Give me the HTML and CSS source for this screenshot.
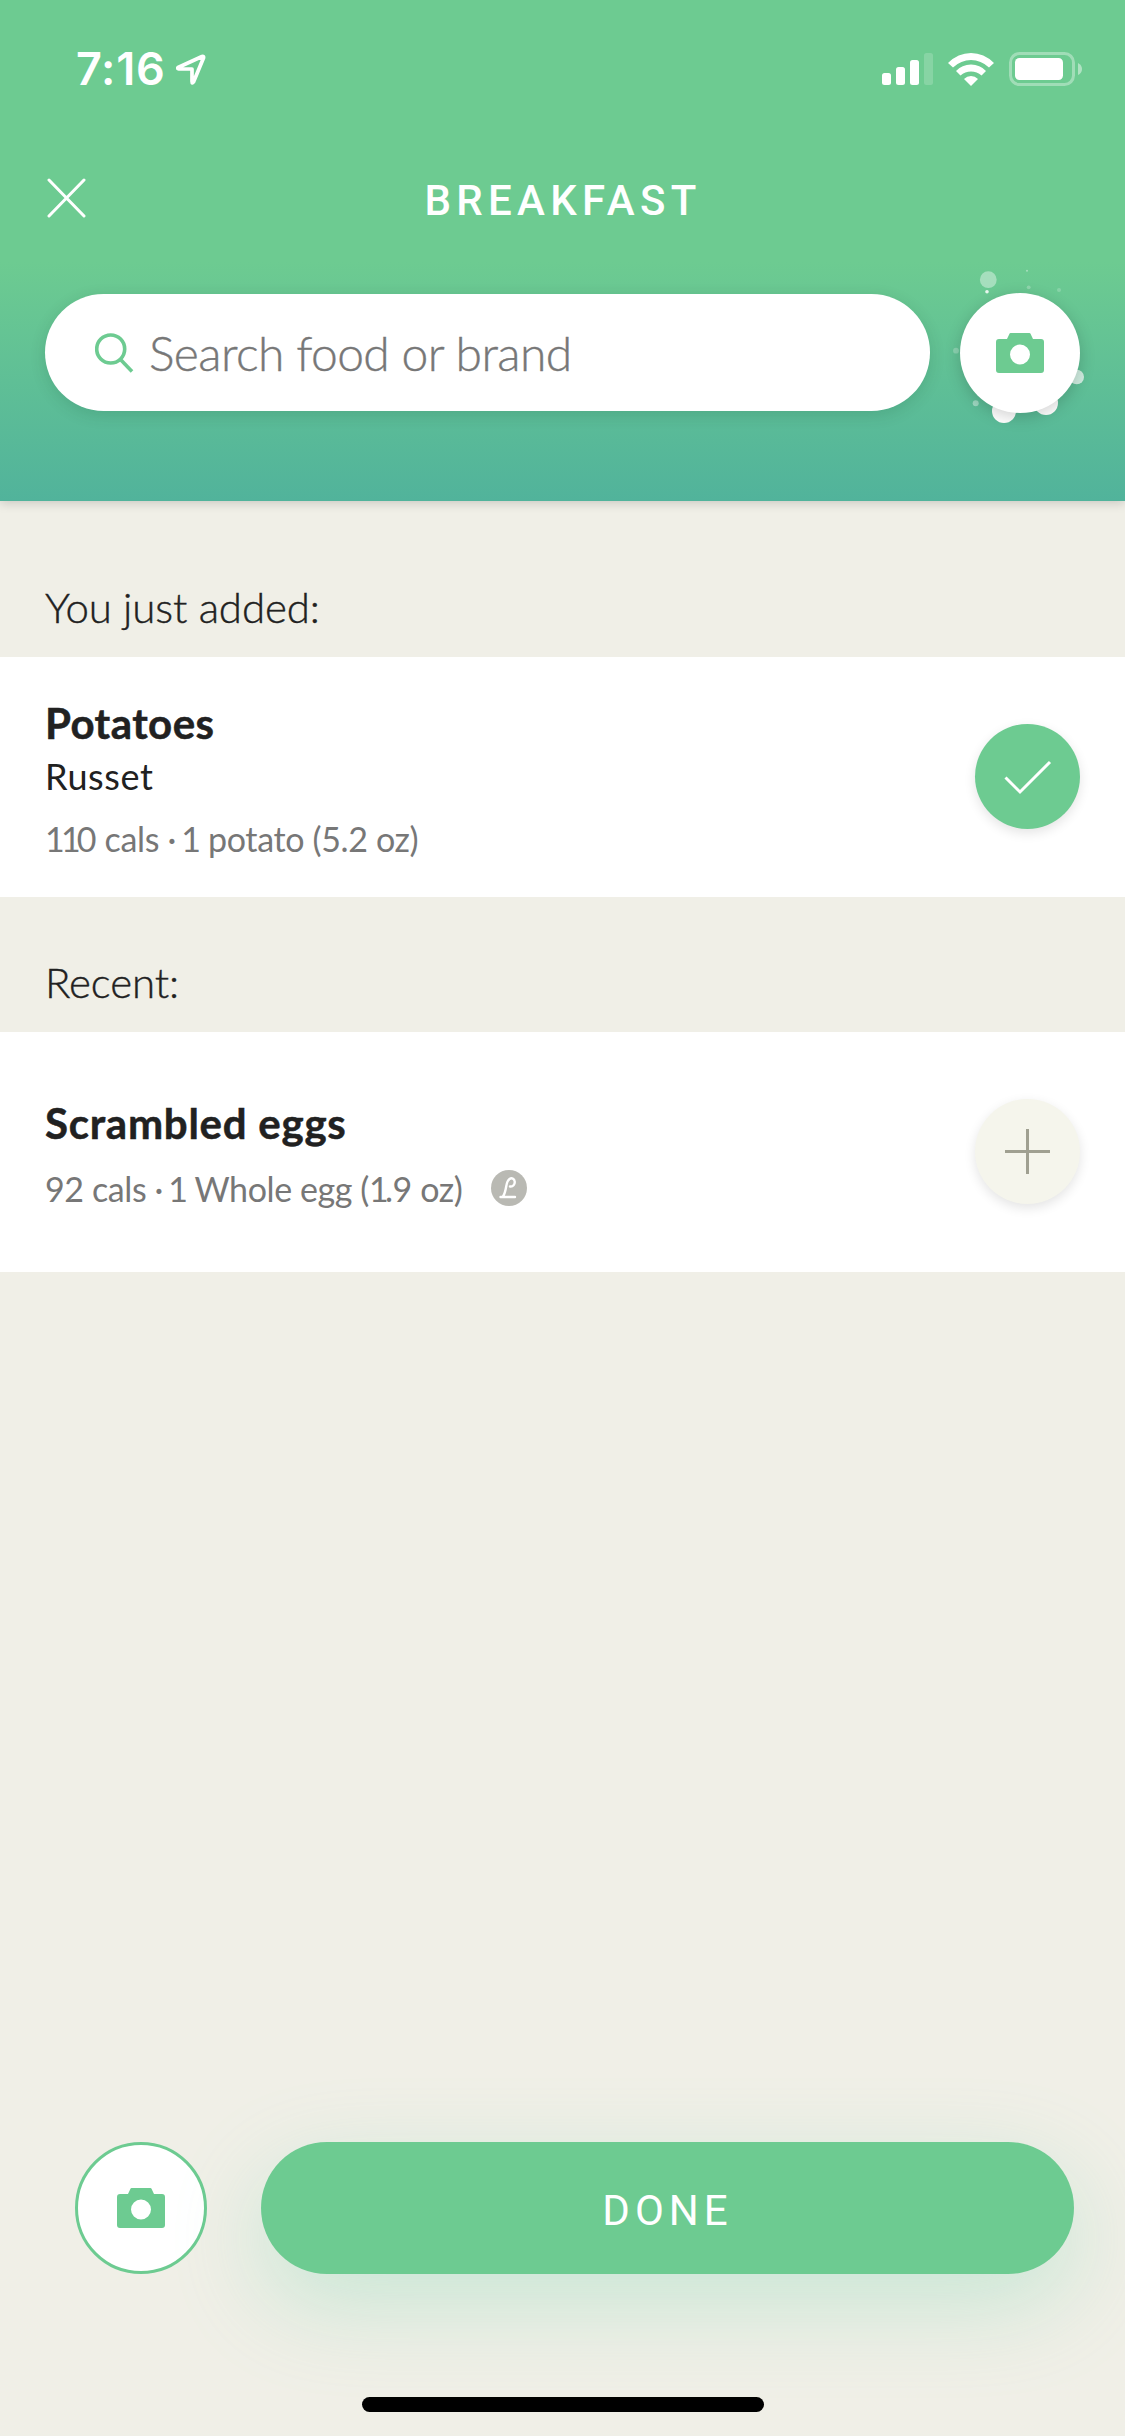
FILE: index.html
```
<!DOCTYPE html>
<html lang="en">
<head>
<meta charset="utf-8">
<title>Breakfast</title>
<link rel="stylesheet" href="styles.css">
</head>
<body>
<svg width="0" height="0" class="defs" aria-hidden="true">
  <symbol id="camera" viewBox="0 0 48 40">
    <path fill-rule="evenodd" d="M14.5 0h19a1 1 0 0 1 .9.6L37 6h8a3 3 0 0 1 3 3v28a3 3 0 0 1-3 3H3a3 3 0 0 1-3-3V9a3 3 0 0 1 3-3h8L13.6.6A1 1 0 0 1 14.5 0ZM24 11.5a10 10 0 1 0 0 20a10 10 0 1 0 0-20Z"/>
  </symbol>
</svg>

<header class="header">
  <div class="status">
    <span class="time">7:16</span>
    <svg class="location" width="30" height="32" viewBox="0 0 30 32"><path d="M2 14.5 26 3.5Q28 3 27.5 5L17.5 29Q16 31 16 28.500V16H3Q1 15.500 2 14.500Z"/></svg>
    <div class="indicators">
      <svg width="51" height="32" viewBox="0 0 51 32" fill="#fff"><rect y="20" width="9" height="12" rx="2.500"/><rect x="14" y="14" width="9" height="18" rx="2.500"/><rect x="28" y="7" width="9" height="25" rx="2.500"/><rect x="42" width="9" height="32" rx="2.500" opacity=".18"/></svg>
      <svg class="wifi" width="46" height="33" viewBox="0 0 46 33" fill="#fff"><path d="M0 10Q10 0 23 0T46 10L41 14.500Q33 7 23 7T5 14.500Z"/><path d="M8 18Q14 11.500 23 11.500T38 18L33.500 22.500Q29 18.500 23 18.500T12.500 22.500Z"/><path d="M16 26Q19 23 23 23T30 26L23 33Z"/></svg>
      <svg class="battery" width="74" height="34" viewBox="0 0 74 34"><rect x="1.500" y="1.500" width="63" height="31" rx="9" fill="none" stroke="#fff" stroke-width="3" opacity=".35"/><rect x="6" y="6" width="48" height="22" rx="4.500" fill="#fff"/><path d="M69 11q4 2 4 6t-4 6Z" fill="#fff" opacity=".45"/></svg>
    </div>
  </div>
  <div class="nav">
    <svg class="close" width="39" height="40" viewBox="0 0 39 40"><path d="m2 2 35 36M37 2 2 38"/></svg>
    <h1 class="title">BREAKFAST</h1>
  </div>
  <div class="search-row">
    <div class="search">
      <svg width="39" height="40" viewBox="0 0 39 40"><circle cx="15.700" cy="16" r="14"/><path d="M25.500 26.500 37 38.500"/></svg>
      <span class="placeholder">Search food or brand</span>
    </div>
    <div class="scan">
      <svg class="sparks" width="160" height="170" viewBox="940 260 160 170" fill="#fff"><circle cx="988.300" cy="279.700" r="8.400" opacity=".4"/><circle cx="987" cy="291.700" r="1.800" opacity=".85"/><circle cx="1027" cy="270.700" r="1" opacity=".4"/><circle cx="1028.700" cy="287.300" r="1.900" opacity=".25"/><circle cx="1059" cy="290" r="2" opacity=".2"/><circle cx="956" cy="350.700" r="2.900" opacity=".25"/><circle cx="975.700" cy="403.300" r="3" opacity=".4"/><circle cx="1004" cy="411" r="12"/><circle cx="1046" cy="403" r="12"/><circle cx="1076.700" cy="377" r="7.300" opacity=".7"/></svg>
      <div class="scan-button"><svg width="48" height="40"><use href="#camera"/></svg></div>
    </div>
  </div>
</header>

<main class="list">
  <h2 class="heading first">You just added:</h2>
  <section class="item">
    <div class="info">
      <div class="name">Potatoes</div>
      <div class="variety">Russet</div>
      <div class="detail"><span class="ones">1</span><span class="ones">1</span>0 cals · <span class="one">1</span> potato (5.2 oz)</div>
    </div>
    <div class="action added"><svg width="105" height="105" viewBox="0 0 105 105"><path d="M30.500 53.500 45 68 75 38"/></svg></div>
  </section>
  <h2 class="heading">Recent:</h2>
  <section class="item short">
    <div class="info">
      <div class="name scrambled">Scrambled eggs</div>
      <div class="detail line"><span class="eggs">92 cals · <span class="one">1</span> Whole egg (<span class="ones">1</span>.9 oz)</span>
        <svg class="badge" width="36" height="36" viewBox="0 0 36 36"><circle cx="18" cy="18" r="18"/><path d="M19 16.500c3 .5 5-2 4.700-5s-3-4-5.200-2.500-2.700 4-3.300 7.500-1.200 7-3.200 10M9.500 27h14.500"/></svg>
      </div>
    </div>
    <div class="action add"><svg width="105" height="105" viewBox="0 0 105 105"><path d="M30 52.500h45M52.500 30v45"/></svg></div>
  </section>
</main>

<footer class="dock">
  <div class="buttons">
    <div class="snap"><svg width="48" height="40"><use href="#camera"/></svg></div>
    <div class="done">DONE</div>
  </div>
  <div class="home"></div>
</footer>
</body>
</html>
```
FILE: styles.css
```
* { box-sizing: border-box; }

body {
  margin: 0;
  width: 1125px;
  height: 2436px;
  display: flex;
  flex-direction: column;
  overflow: hidden;
  background: #f0efe7;
  color: #212121;
  font-family: Lato, sans-serif;
}

svg { display: block; flex: none; }
.defs { position: absolute; }

.header {
  height: 501px;
  flex: none;
  background: linear-gradient(#6dcb91 0, #6dcb91 262px, #51b39b 501px);
  box-shadow: 0 2px 10px rgba(0, 0, 0, .17);
}

.status {
  height: 138px;
  padding: 0 43px 0 76px;
  display: flex;
  align-items: center;
}
.time {
  color: #fff;
  font: 600 45px/54px Inter, sans-serif;
  letter-spacing: .7px;
  width: 100px;
}
.location {
  fill: none;
  stroke: #fff;
  stroke-width: 3.7;
  stroke-linejoin: round;
}
.indicators { margin-left: auto; display: flex; align-items: center; }
.wifi { margin-left: 15px; }
.battery { margin-left: 15px; margin-right: -1px; }

.nav {
  height: 120px;
  padding: 0 46px 0 47px;
  display: grid;
  grid-template-columns: 39px 1fr 39px;
  align-items: center;
}
.close { fill: none; stroke: #fff; stroke-width: 3; stroke-linecap: round; }
.title {
  margin: 5px 0 0;
  text-align: center;
  color: #fff;
  font: 500 42px/50px Roboto, sans-serif;
  letter-spacing: 5.3px;
}

.search-row {
  padding: 35px 45px 0;
  display: flex;
  justify-content: space-between;
}
.search {
  width: 885px;
  height: 117px;
  margin-top: 1px;
  padding-left: 50px;
  display: flex;
  align-items: center;
  border-radius: 59px;
  background: #fff;
  box-shadow: 0 4px 16px rgba(0, 60, 30, .14);
}
.search svg { fill: none; stroke: #6dcb91; stroke-width: 3.6; }
.placeholder {
  margin-left: 15px;
  color: #777;
  font-size: 48px;
  font-weight: 300;
  line-height: 60px;
  letter-spacing: -.6px;
  -webkit-text-stroke: .4px;
}
.scan { position: relative; width: 120px; height: 120px; }
.sparks { position: absolute; left: -20px; top: -33px; }
.scan-button {
  position: relative;
  width: 120px;
  height: 120px;
  display: flex;
  align-items: center;
  justify-content: center;
  border-radius: 50%;
  background: #fff;
  fill: #6dcb91;
  box-shadow: 0 4px 16px rgba(0, 0, 0, .18);
}

.heading {
  height: 135px;
  margin: 0;
  padding: 60px 45px 25px;
  font-size: 42px;
  font-weight: 300;
  line-height: 50px;
  letter-spacing: -.1px;
  -webkit-text-stroke: .4px;
}
.heading.first { height: 156px; padding-top: 81px; }

.item {
  height: 240px;
  padding: 0 45px;
  display: flex;
  align-items: center;
  justify-content: space-between;
  background: #fff;
}
.info { height: 240px; padding-top: 41px; }
.short .info { padding-top: 66px; }
.name { font-size: 42px; font-weight: 700; line-height: 50px; letter-spacing: .45px; -webkit-text-stroke: .5px; }
.scrambled { letter-spacing: .75px; }
.variety { font-size: 36px; line-height: 56px; letter-spacing: .6px; }
.detail {
  margin-top: 10px;
  color: #777;
  font-size: 34px;
  line-height: 50px;
  letter-spacing: -.35px;
}
.short .detail { margin-top: 16px; letter-spacing: -.4px; }
.line { display: flex; align-items: center; }
.detail .ones { letter-spacing: -3.8px; }
.one { margin: 0 -1px 0 -3px; }
.eggs { width: 446px; white-space: nowrap; }
.badge { margin-top: -3px; fill: none; stroke: #fff; stroke-width: 2.4; stroke-linecap: round; }
.badge circle { fill: #b9b9b3; stroke: none; }

.action {
  width: 105px;
  height: 105px;
  border-radius: 50%;
  box-shadow: 0 4px 12px rgba(0, 0, 0, .11);
  position: relative;
  top: -.5px;
}
.action svg { fill: none; stroke-width: 3; }
.added { background: #6dcb91; stroke: #fff; }
.add { background: #f5f5ec; stroke: #a0a091; }

.dock { margin-top: auto; height: 294px; }
.buttons { display: flex; gap: 54px; padding: 0 51px 0 75px; }
.snap {
  width: 132px;
  height: 132px;
  display: flex;
  align-items: center;
  justify-content: center;
  border: 3px solid #6dcb91;
  border-radius: 50%;
  background: #fff;
  fill: #6dcb91;
}
.done {
  flex: 1;
  height: 132px;
  padding: 3px 0 0;
  border-radius: 66px;
  background: #6dcb91;
  box-shadow: 0 30px 90px rgba(109, 212, 172, .3);
  color: #fff;
  font: 400 42px/132px Roboto, sans-serif;
  letter-spacing: 5px;
  text-align: center;
}
.home {
  width: 402px;
  height: 15px;
  margin: 123px auto 0;
  border-radius: 8px;
  background: #000;
}
```
